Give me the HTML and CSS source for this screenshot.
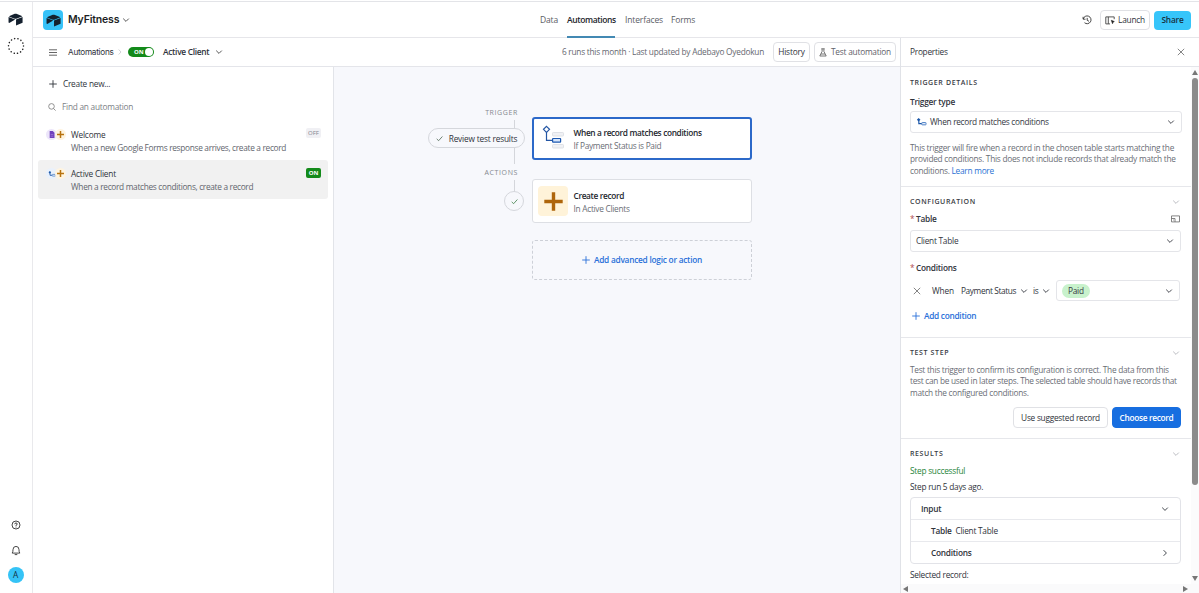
FILE: index.html
```html
<!DOCTYPE html>
<html lang="en">
<head>
<meta charset="utf-8">
<title>MyFitness - Automations</title>
<link rel="stylesheet" href="styles.css">
</head>
<body>
<svg class="defs" width="0" height="0">
  <symbol id="chev" viewBox="0 0 8 8"><path d="M1.200 2.600 4 5.400 6.800 2.600" fill="none" stroke="currentColor" stroke-width=".9"/></symbol>
  <symbol id="plus" viewBox="0 0 8 8"><path d="M4 .2v7.600M.2 4h7.600" fill="none" stroke="currentColor" stroke-width=".9"/></symbol>
  <symbol id="cross" viewBox="0 0 8 8"><path d="M.8.8l6.400 6.400M7.200.8.8 7.200" fill="none" stroke="currentColor" stroke-width=".8"/></symbol>
  <symbol id="check" viewBox="0 0 8 8"><path d="M.8 4.400 3 6.500 7.300 1.700" fill="none" stroke="currentColor" stroke-width=".9"/></symbol>
  <symbol id="brand" viewBox="0 0 14 12"><path d="M6.300.7Q7 .4 7.800.7L13 2.700Q13.500 3 13 3.300L7.700 5.300Q7 5.500 6.300 5.300L1.400 3.500Q.9 3.100 1.400 2.800ZM7.500 5.900 13.600 3.700V9.100L7.500 11.500ZM.5 3.700 6.700 6 2 8.900Q.5 9.700.5 8.300Z" fill="#14202e"/></symbol>
  <symbol id="match" viewBox="0 0 12 9"><path d="M3 3v3.400h3.500" fill="none" stroke="#1a56a8" stroke-width="1.300"/><path d="M2.800 0 4.800 2 2.800 4 .8 2Z" fill="#1a56a8"/><rect x="6.300" y="5.100" width="4.800" height="2.600" rx=".6" fill="#e6eefb" stroke="#3f76c0" stroke-width="1"/></symbol>
</svg>
<div class="app">
  <nav class="rail">
    <svg class="rail-logo" width="15" height="13"><use href="#brand"/></svg>
    <svg class="rail-ring" width="18" height="18" viewBox="0 0 18 18"><circle cx="9" cy="9" r="7.500" fill="none" stroke="#222" stroke-width="1.500" stroke-linecap="round" stroke-dasharray=".1 3.266"/></svg>
    <span class="spacer"></span>
    <svg class="rail-help" width="10" height="10" viewBox="0 0 10 10" fill="none" stroke="#333" stroke-width=".9"><circle cx="5" cy="5" r="4"/><path d="M3.700 4.200Q3.700 3 5 3T6.300 4.100Q6.300 4.700 5 5.200V5.900M5 6.600v.9"/></svg>
    <svg class="rail-bell" width="10" height="11" viewBox="0 0 10 11" fill="none" stroke="#333" stroke-width=".9"><path d="M1.200 8.100Q2 7 2 4.700 2 1.400 5 1.400T8 4.700Q8 7 8.800 8.100ZM3.700 9.600h2.600"/></svg>
    <span class="avatar">A</span>
  </nav>
  <div class="main">
    <header class="top">
      <div class="base">
        <span class="base-icon"><svg width="15" height="13"><use href="#brand"/></svg></span>
        <span class="base-name">MyFitness</span>
        <svg class="ink" width="8" height="8"><use href="#chev"/></svg>
      </div>
      <div class="tabs">
        <span class="tab t-data">Data</span><span class="tab t-auto active">Automations</span><span class="tab t-int">Interfaces</span><span class="tab">Forms</span>
      </div>
      <div class="actions">
        <svg class="hist" width="10" height="10" viewBox="0 0 10 10" fill="none" stroke="#333" stroke-width=".9"><path d="M1.100 1.800v2.400h2.400M1.300 4A3.900 3.900 0 1 1 2.500 7.700M5.200 2.900v2.400l1.800 1"/></svg>
        <span class="btn launch"><svg width="10" height="9" viewBox="0 0 10 9" fill="none" stroke="#444" stroke-width=".9"><path d="M5 7.900H.8V.9h8.400v2.300M3.300.9v7"/><path d="M6.300 4.300l3 1.200-1.300.7-.5 1.500Z" fill="#222" stroke="#222" stroke-width=".6"/></svg>Launch</span>
        <span class="btn share">Share</span>
      </div>
    </header>
    <div class="body">
      <div class="work">
        <div class="toolbar">
          <svg class="menu" width="8" height="7" viewBox="0 0 8 7" stroke="#555" stroke-width=".9"><path d="M0 .8h8M0 3.500h8M0 6.200h8"/></svg>
          <span class="crumb">Automations</span>
          <svg class="crumb-sep" width="4" height="6" viewBox="0 0 4 6" fill="none" stroke="#c5c5cb" stroke-width=".8"><path d="M.7.5 3 3 .7 5.500"/></svg>
          <span class="toggle">ON<i></i></span>
          <span class="flow-name">Active Client</span>
          <svg class="ink" width="8" height="8"><use href="#chev"/></svg>
          <span class="spacer"></span>
          <span class="runs">6 runs this month · Last updated by Adebayo Oyedokun</span>
          <span class="btn b-hist">History</span>
          <span class="btn b-test"><svg width="8" height="9" viewBox="0 0 8 9" fill="none" stroke="#666" stroke-width=".9"><path d="M2.300.8h3.400M3.100.8v2.600L.8 8h6.400L4.900 3.400V.8M2 6h4"/></svg>Test automation</span>
        </div>
        <div class="stage">
          <aside class="list">
            <div class="line create"><svg width="8" height="8"><use href="#plus"/></svg><span>Create new...</span></div>
            <div class="line find"><svg width="8" height="8" viewBox="0 0 8 8" fill="none" stroke="#777" stroke-width=".8"><circle cx="3.500" cy="3.400" r="2.800"/><path d="M5.600 5.600 7.600 7.600"/></svg><span>Find an automation</span></div>
            <div class="flow welcome">
              <span class="pair"><b class="dot"><svg width="6" height="7" viewBox="0 0 7 8"><path d="M.8 0h3.600L6.400 2v6H.8Z" fill="#7040bd"/><path d="M2 4h3M2 6h3" stroke="#a98ada" stroke-width=".7"/></svg></b><b class="dot amber"><svg width="7" height="7" viewBox="0 0 7 7"><path d="M3.500 0v7M0 3.500h7" stroke="#b8730f" stroke-width="1.500"/></svg></b></span>
              <div class="flow-text"><span class="flow-title">Welcome</span><span class="flow-sub">When a new Google Forms response arrives, create a record</span></div>
              <span class="tag off">OFF</span>
            </div>
            <div class="flow current">
              <span class="pair"><b class="dot"><svg width="8" height="6"><use href="#match"/></svg></b><b class="dot amber"><svg width="7" height="7" viewBox="0 0 7 7"><path d="M3.500 0v7M0 3.500h7" stroke="#b8730f" stroke-width="1.500"/></svg></b></span>
              <div class="flow-text"><span class="flow-title">Active Client</span><span class="flow-sub">When a record matches conditions, create a record</span></div>
              <span class="tag on">ON</span>
            </div>
          </aside>
          <section class="canvas">
            <span class="stem s1"></span><span class="stem s2"></span><span class="stem s3"></span>
            <span class="kind k1">TRIGGER</span>
            <span class="kind k2">ACTIONS</span>
            <span class="pill"><svg width="7" height="7"><use href="#check"/></svg>Review test results</span>
            <span class="done"><svg width="7" height="7"><use href="#check"/></svg></span>
            <div class="node selected">
              <svg class="node-art" width="24" height="26" viewBox="0 0 24 26" fill="none"><rect x="10.500" y="7.500" width="11" height="3.500" rx=".8" fill="#f0f1f4" stroke="#dfe1e6"/><rect x="10.500" y="19.500" width="11" height="3.500" rx=".8" fill="#f0f1f4" stroke="#dfe1e6"/><path d="M4.500 7v8.300h6" stroke="#2456a4" stroke-width="1.200"/><path d="M4.500 1.300 7.500 4.300 4.500 7.300 1.500 4.300Z" fill="#fff" stroke="#2456a4" stroke-width="1.200"/><rect x="10.600" y="13.500" width="8" height="3.700" rx=".5" fill="#d5e5fb" stroke="#1d58b0" stroke-width="1.200"/></svg>
              <div class="node-text"><b>When a record matches conditions</b><span>If Payment Status is Paid</span></div>
            </div>
            <div class="node create-node">
              <span class="tile"><svg width="19" height="19" viewBox="0 0 19 19"><path d="M9.500.3v18.400M.3 9.500h18.400" stroke="#ae650b" stroke-width="3.400"/></svg></span>
              <div class="node-text"><b>Create record</b><span>In Active Clients</span></div>
            </div>
            <div class="add-node"><svg width="8" height="8"><use href="#plus"/></svg>Add advanced logic or action</div>
          </section>
        </div>
      </div>
      <aside class="props">
        <div class="props-head"><span>Properties</span><svg class="x" width="8" height="8"><use href="#cross"/></svg></div>
        <div class="props-wrap">
          <div class="props-body">
            <section class="sec sec-trigger">
              <div class="cap">TRIGGER DETAILS</div>
              <div class="label">Trigger type</div>
              <div class="select sel-type"><svg class="type-icon" width="11" height="8"><use href="#match"/></svg><span class="grow">When record matches conditions</span><svg width="8" height="8"><use href="#chev"/></svg></div>
              <p class="copy c1">This trigger will fire when a record in the chosen table starts matching the<br>provided conditions. This does not include records that already match the<br>conditions. <a>Learn more</a></p>
            </section>
            <section class="sec sec-config">
              <div class="cap">CONFIGURATION<svg width="8" height="8"><use href="#chev"/></svg></div>
              <div class="label l-table"><i>*</i>Table<svg width="9" height="8" viewBox="0 0 9 8" fill="none" stroke="#666" stroke-width=".8"><path d="M.5.900h8v6h-8ZM.5 3.500h3.500v3.400M2 5h.8"/></svg></div>
              <div class="select sel-table"><span class="grow">Client Table</span><svg width="8" height="8"><use href="#chev"/></svg></div>
              <div class="label l-cond"><i>*</i>Conditions</div>
              <div class="cond">
                <svg class="x" width="8" height="8"><use href="#cross"/></svg>
                <span class="when">When</span><span class="field">Payment Status</span><svg class="f-chev" width="8" height="8"><use href="#chev"/></svg><span class="is">is</span><svg width="8" height="8"><use href="#chev"/></svg>
                <div class="select sel-paid"><span class="paid">Paid</span><span class="grow"></span><svg width="8" height="8"><use href="#chev"/></svg></div>
              </div>
              <div class="add-cond"><svg width="8" height="8"><use href="#plus"/></svg>Add condition</div>
            </section>
            <section class="sec sec-test">
              <div class="cap">TEST STEP<svg width="8" height="8"><use href="#chev"/></svg></div>
              <p class="copy c2">Test this trigger to confirm its configuration is correct. The data from this<br>test can be used in later steps. The selected table should have records that<br>match the configured conditions.</p>
              <div class="pick"><span class="btn suggested">Use suggested record</span><span class="btn choose">Choose record</span></div>
            </section>
            <section class="sec sec-results">
              <div class="cap">RESULTS<svg width="8" height="8"><use href="#chev"/></svg></div>
              <div class="ok">Step successful</div>
              <div class="ran">Step run 5 days ago.</div>
              <div class="tree">
                <div class="tr"><b>Input</b><svg width="8" height="8"><use href="#chev"/></svg></div>
                <div class="tr sub"><b>Table</b><span>Client Table</span></div>
                <div class="tr sub"><b>Conditions</b><svg class="right" width="8" height="8"><use href="#chev"/></svg></div>
              </div>
              <div class="ran picked">Selected record:</div>
            </section>
          </div>
          <div class="vbar"><i class="up"></i><i class="thumb"></i><span class="spacer"></span><i class="down"></i></div>
        </div>
        <div class="hbar"><i class="left"></i><i class="rt"></i></div>
      </aside>
    </div>
  </div>
</div>
</body>
</html>
```
FILE: styles.css
```css
* { box-sizing: border-box; }
body { margin: 0; width: 1199px; height: 593px; overflow: hidden; background: #fff; color: #2f333b; font: 8.3px/16px "Open Sans", "Noto Sans", sans-serif; letter-spacing: -0.25px; white-space: nowrap; }
svg { flex: none; display: block; }
i { font-style: normal; }
.defs { position: absolute; }
.spacer, .grow { flex: 1; }
.ink { color: #444; }
.app { display: flex; height: 593px; border-top: 1px solid #fff; padding-top: 1px; background: linear-gradient(#e3e4e8, #e3e4e8) 0 0 / 100% 1px no-repeat; }

.rail { width: 33px; border-right: 1px solid #e9e9ec; display: flex; flex-direction: column; align-items: center; padding: 11px 1px 10px 0; }
.rail-ring { margin-top: 11px; }
.rail-bell { margin-top: 15px; }
.avatar { width: 16px; height: 16px; margin-top: 11px; border-radius: 50%; background: #35c3f6; text-align: center; color: #14303f; }

.main { flex: 1; min-width: 0; display: flex; flex-direction: column; }
.top { height: 36px; flex: none; border-bottom: 1px solid #e6e6ea; display: grid; grid-template-columns: 507px 1fr auto; }
.base { display: flex; align-items: center; padding-left: 10px; }
.base-icon { width: 20px; height: 20px; border-radius: 4px; background: #37c2f8; display: grid; place-items: center; }
.base-name { width: 51px; margin: 0 3px 0 5px; font-family: Inter, sans-serif; font-size: 10.5px; font-weight: 600; letter-spacing: -.16px; color: #1d1f25; }
.tabs { display: flex; color: #5a5d66; font-size: 8.5px; line-height: 35px; letter-spacing: -.14px; }
.tab { height: 36px; }
.t-data { width: 27px; }
.t-auto { width: 48px; margin-right: 10px; letter-spacing: -.39px; }
.t-int { width: 46px; }
.active { color: #24262c; font-weight: 600; border-bottom: 2px solid #4389b3; }
.actions { display: flex; align-items: center; padding-right: 8px; }
.btn { height: 20px; border: 1px solid #e0e1e5; border-radius: 4px; display: flex; align-items: center; justify-content: center; flex: none; background: #fff; letter-spacing: -.2px; }
.launch { width: 50px; margin: 0 4px 0 8px; gap: 3px; }
.share { width: 37px; border: 0; height: 19px; background: #37c5fa; font-weight: 600; color: #17313f; }

.body { flex: 1; min-height: 0; display: flex; }
.work { width: 867px; display: flex; flex-direction: column; }
.toolbar { height: 29px; flex: none; border-bottom: 1px solid #e4e5ea; display: flex; align-items: center; padding: 0 4px 0 16px; }
.crumb { width: 45px; margin: 0 5px 0 11px; font-family: Inter, sans-serif; font-size: 8.2px; letter-spacing: -.27px; }
.toggle { width: 26px; height: 10px; margin: 0 9px 0 6px; border-radius: 5px; background: #138a1a; color: #fff; font-size: 6px; font-weight: 700; line-height: 10px; letter-spacing: 0; display: flex; justify-content: space-between; align-items: center; padding: 0 1px 0 6px; }
.toggle i { width: 8px; height: 8px; border-radius: 50%; background: #fff; }
.flow-name { width: 47px; margin-right: 5px; font-weight: 600; font-size: 8.4px; letter-spacing: -.3px; }
.runs { color: #65676f; }
.b-hist { width: 37px; margin: 0 4px 0 9px; letter-spacing: -.15px; }
.b-test { width: 82px; gap: 4px; color: #5f626a; letter-spacing: -.23px; }

.stage { flex: 1; min-height: 0; display: flex; }
.list { width: 301px; border-right: 1px solid #e2e4e9; padding: 9px 5px 0; }
.line { display: flex; align-items: center; height: 16px; padding-left: 11px; }
.create { gap: 6px; }
.find { gap: 6px; margin-top: 7px; padding-left: 10px; color: #7d7f86; }
.flow { height: 39px; border-radius: 3px; display: flex; padding: 7px 7px 0 8px; }
.welcome { height: 40px; margin-top: 5px; }
.current { background: #f1f1f1; padding-top: 6px; }
.current .tag { margin-top: 2px; }
.pair { display: flex; width: 25px; padding-top: 2px; }
.dot { width: 11px; height: 11px; border-radius: 50%; display: grid; place-items: center; }
.welcome .dot:first-child { background: #ece5fa; }
.current .dot:first-child { background: #e9f1fc; }
.pair .amber { background: #fff4df; margin-left: -2px; }
.flow-text { flex: 1; display: flex; flex-direction: column; line-height: 13px; padding-top: 1px; }
.flow-title { letter-spacing: -.18px; }
.flow-sub { color: #62656d; letter-spacing: -.31px; }
.tag { width: 15px; height: 10px; margin-top: 1px; border-radius: 2px; font-size: 6px; line-height: 10px; text-align: center; letter-spacing: 0; }
.off { background: #f0f0f4; color: #85858f; }
.on { background: #138a1a; color: #fff; font-weight: 700; }

/* free canvas: nodes sit at their own coordinates */
.canvas { position: relative; flex: 1; background: #f7f8fc; }
.canvas > * { position: absolute; }
.stem { left: 180px; width: 1px; background: #d4d6db; }
.s1 { top: 53px; height: 9px; }
.s2 { top: 81px; height: 16px; }
.s3 { top: 113px; height: 12px; }
.kind { right: 382px; font-size: 7px; letter-spacing: .62px; color: #85888f; line-height: 12px; }
.k1 { top: 40px; }
.k2 { top: 100px; }
.pill { left: 94px; top: 61px; width: 97px; height: 20px; border: 1px solid #d5d7dc; border-radius: 10px; display: flex; align-items: center; justify-content: center; gap: 6px; letter-spacing: -.18px; line-height: 17px; }
.done { left: 170px; top: 124px; width: 20px; height: 20px; border: 1px solid #d5d7dc; border-radius: 50%; display: grid; place-items: center; color: #397a42; }
.pill svg { color: #4b6450; }
.node { left: 198px; width: 220px; height: 44px; background: #fff; border: 1px solid #dddfe4; border-radius: 3px; display: flex; }
.selected { top: 50px; height: 43px; border: 2px solid #2c69c9; padding-left: 8px; }
.node-art { margin: 6px 7.5px 0 0; }
.node-text { display: flex; flex-direction: column; line-height: 13px; padding-top: 6.5px; color: #6a6d75; }
.node-text b { font-weight: 600; color: #24272e; letter-spacing: -.34px; }
.node-text span { letter-spacing: -.28px; }
.create-node { top: 112px; padding-left: 5px; }
.create-node .node-text { margin-left: 5.500px; padding-top: 8.500px; }
.tile { width: 30px; height: 30px; margin-top: 6px; border-radius: 4px; background: #fff3d9; display: grid; place-items: center; }
.add-node { left: 198px; top: 173px; width: 220px; height: 40px; border: 1px dashed #cdd0d7; border-radius: 3px; display: flex; align-items: center; justify-content: center; gap: 4px; color: #2970d9; font-weight: 600; letter-spacing: -.24px; }

.props { flex: 1; min-width: 0; border-left: 1px solid #e0e2e7; display: flex; flex-direction: column; }
.props-head { height: 29px; flex: none; border-bottom: 1px solid #e4e5ea; display: flex; align-items: center; justify-content: space-between; padding: 0 14px 0 9px; letter-spacing: -.25px; }
.props-wrap { flex: 1; min-height: 0; display: flex; overflow: hidden; }
.props-body { width: 290px; }
.sec { border-bottom: 1px solid #e6e7eb; padding: 7px 10px 0 9px; }
.sec-trigger { height: 120px; padding: 8px 9px 0; }
.sec-config { height: 151px; }
.sec-test { height: 101px; }
.sec-results { border: 0; }
.cap { display: flex; justify-content: space-between; align-items: center; padding-right: 1px; font-size: 7px; font-weight: 600; letter-spacing: .62px; color: #3a3d45; }
.cap svg { color: #b3b4ba; }
.label { font-weight: 600; margin-top: 3px; display: flex; align-items: center; }
.label i { color: #b04a50; font-weight: 400; width: 6px; }
.label svg { margin-left: auto; }
.l-table { margin-top: 1px; padding-right: 1px; }
.l-cond { margin-top: 8px; }
.select { height: 22px; border: 1px solid #e4e5e9; border-radius: 3px; display: flex; align-items: center; padding: 0 6px 0 5px; color: #34373f; }
.sel-type { margin-top: 1px; letter-spacing: -.3px; }
.type-icon { margin-right: 3px; }
.sel-table { margin-top: 3px; }
.copy { margin: 9px 0 0; line-height: 11.3px; color: #6a6d75; letter-spacing: -.26px; }
.copy a { color: #2b72d4; }
.c2 { margin-top: 3px; letter-spacing: -.28px; }
.cond { display: flex; align-items: center; margin-top: 4px; height: 21px; padding-left: 3px; }
.x { color: #666; }
.when { width: 22px; margin: 0 7px 0 11px; letter-spacing: -.15px; }
.field { width: 55px; letter-spacing: -.38px; }
.f-chev { margin: 0 5px 0 4px; }
.is { width: 6px; margin-right: 3px; }
.sel-paid { width: 124px; height: 21px; margin-left: 6px; }
.paid { height: 14px; line-height: 14px; border-radius: 7px; background: #c8f2cc; padding: 0 6px; }
.add-cond { margin-top: 7px; padding-left: 2px; display: flex; align-items: center; gap: 4px; color: #2970d9; font-weight: 600; letter-spacing: -.28px; }
.pick { display: flex; justify-content: flex-end; gap: 4px; margin-top: 9px; line-height: 17px; }
.pick .btn { padding-top: 1px; letter-spacing: -.25px; }
.suggested { width: 95px; height: 21px; }
.pick .choose { width: 69px; height: 21px; background: #176ee0; border-color: #176ee0; color: #fff; font-weight: 600; letter-spacing: -.32px; }
.ok { color: #26843a; margin-top: 1px; }
.tree { margin-top: 2px; height: 67px; border: 1px solid #e2e3e8; border-radius: 4px; }
.tr { height: 22px; display: flex; align-items: center; padding: 0 11px 0 10px; }
.tr:first-child { height: 21px; }
.tr b { font-weight: 600; }
.tr svg { margin-left: auto; }
.tr span { margin-left: 4px; }
.tr.sub { padding-left: 20px; border-top: 1px solid #e8e9ed; }
.right { transform: rotate(-90deg); }
.picked { margin-top: 3px; }
.vbar { width: 8px; display: flex; flex-direction: column; align-items: center; padding: 3px 0 3px; background: #fbfbfc; }
.up, .down { border: 3px solid transparent; border-top: 0; border-bottom: 5px solid #777; }
.down { border-bottom: 0; border-top: 5px solid #777; }
.thumb { width: 6px; height: 407px; margin-top: 3px; border-radius: 3px; background: #8b8b8b; }
.hbar { height: 9px; flex: none; background: #fafafb; display: flex; justify-content: space-between; align-items: center; padding: 0 11px 0 2px; }
.left, .rt { border: 3px solid transparent; border-left: 0; border-right: 5px solid #777; }
.rt { border-right: 0; border-left: 5px solid #777; }
```
